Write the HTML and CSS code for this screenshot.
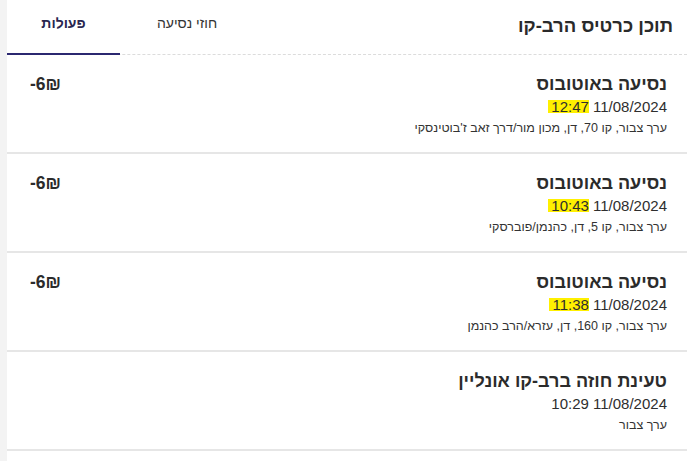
FILE: index.html
```html
<!DOCTYPE html>
<html lang="he" dir="rtl">
<head>
<meta charset="utf-8">
<link rel="stylesheet" href="styles.css">
</head>
<body>
<div class="page">
  <div class="panel">
    <header class="head">
      <h1 class="title">תוכן כרטיס הרב-קו</h1>
      <nav class="tabs">
        <div class="tab">חוזי נסיעה</div>
        <div class="tab active">פעולות</div>
      </nav>
    </header>
    <div class="row">
      <div class="info">
        <div class="name">נסיעה באוטובוס</div>
        <div class="date">11/08/2024 <mark class="hl">12:47</mark></div>
        <div class="desc">ערך צבור, קו 70, דן, מכון מור/דרך זאב ז'בוטינסקי</div>
      </div>
      <div class="amount">-6₪</div>
    </div>
    <div class="row">
      <div class="info">
        <div class="name">נסיעה באוטובוס</div>
        <div class="date">11/08/2024 <mark class="hl">10:43</mark></div>
        <div class="desc">ערך צבור, קו 5, דן, כהנמן/פוברסקי</div>
      </div>
      <div class="amount">-6₪</div>
    </div>
    <div class="row">
      <div class="info">
        <div class="name">נסיעה באוטובוס</div>
        <div class="date">11/08/2024 <mark class="hl">11:38</mark></div>
        <div class="desc">ערך צבור, קו 160, דן, עזרא/הרב כהנמן</div>
      </div>
      <div class="amount">-6₪</div>
    </div>
    <div class="row">
      <div class="info">
        <div class="name">טעינת חוזה ברב-קו אונליין</div>
        <div class="date">11/08/2024 10:29</div>
        <div class="desc">ערך צבור</div>
      </div>
      <div class="amount"></div>
    </div>
  </div>
</div>
</body>
</html>
```
FILE: styles.css
```css
* { box-sizing: border-box; }
html, body { margin: 0; padding: 0; }
body {
  background: #f3f3f3;
  font-family: "Liberation Sans", "DejaVu Sans", sans-serif;
  color: #2e2e2e;
  width: 687px;
  height: 461px;
  overflow: hidden;
}
.page {
  display: flex;
  justify-content: flex-start;
  padding-left: 7px;
  direction: ltr;
}
.panel {
  direction: rtl;
  background: #fff;
  width: 680px;
  min-height: 461px;
}
.head {
  display: flex;
  justify-content: space-between;
  align-items: stretch;
  height: 55px;
  border-bottom: 1px dashed #dcdcdc;
}
.title {
  margin: 0;
  padding: 15px 14px 0 0;
  font-size: 18.5px;
  font-weight: bold;
  color: #2a2a2a;
}
.tabs {
  display: flex;
  align-items: stretch;
}
.tab {
  display: flex;
  align-items: flex-start;
  justify-content: center;
  padding-top: 15px;
  width: 134px;
  font-size: 14px;
  color: #333;
}
.tab.active {
  width: 113px;
  font-weight: bold;
  color: #29264f;
  border-bottom: 2px solid #2b2870;
  margin-bottom: -1px;
}
.row {
  display: flex;
  justify-content: space-between;
  align-items: flex-start;
  height: 99px;
  padding: 17px 20px 0 23px;
  border-bottom: 2px solid #e6e6e6;
}
.name {
  font-size: 18px;
  font-weight: bold;
  color: #2b2b2b;
  line-height: 24px;
}
.date {
  font-size: 15px;
  line-height: 20px;
  margin-top: 1px;
  color: #2e2e2e;
}
.hl {
  display: inline-block;
  background: #fff000;
  color: #2e2e2e;
  line-height: 13px;
  padding: 0 0 0 3px;
}
.desc {
  font-size: 12.5px;
  line-height: 18px;
  margin-top: 2px;
  color: #333;
}
.amount {
  font-size: 17.5px;
  font-weight: bold;
  color: #2b2b2b;
  padding-top: 2px;
  direction: ltr;
}
```
